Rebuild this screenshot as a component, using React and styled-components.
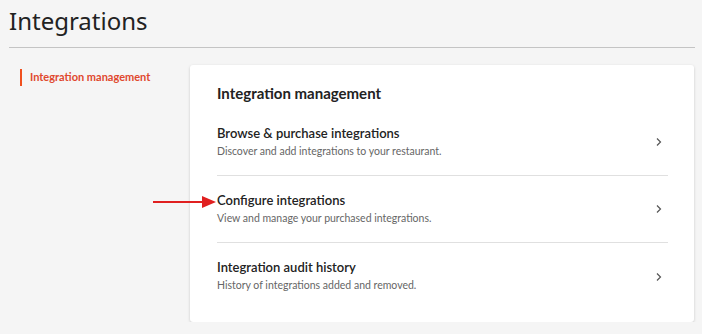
import React from "react";
import styled, { createGlobalStyle } from "styled-components";

const Global = createGlobalStyle`
  html, body { margin: 0; padding: 0; background: #f5f5f5; }
  body { font-family: Lato, "Open Sans", sans-serif; color: #222; }
`;

const Page = styled.div`
  padding: 5px 7px 0 9px;
  position: relative;
`;

const Title = styled.h1`
  margin: 0;
  font-family: "Noto Sans", sans-serif;
  font-weight: 400;
  font-size: 24px;
  line-height: 32px;
  color: #222;
  padding-bottom: 10px;
  border-bottom: 1px solid #c4c4c4;
`;

const Body = styled.div`
  display: grid;
  grid-template-columns: 181px 504px;
  margin-top: 17px;
`;

const Nav = styled.nav`
  padding-top: 4px;
  padding-left: 11px;
`;

const NavItem = styled.div`
  border-left: 2px solid ${(p) => (p.$active ? "#f0501e" : "transparent")};
  padding-left: 8px;
  height: 17px;
  line-height: 15px;
  font-size: 11px;
  font-weight: 700;
  color: #e0482e;
`;

const Card = styled.section`
  background: #fff;
  border-radius: 3px;
  box-shadow: 0 1px 3px rgba(0, 0, 0, 0.18);
  padding: 18px 26px 12px 27px;
`;

const CardTitle = styled.h2`
  margin: 0 0 6px;
  font-size: 15px;
  font-weight: 700;
  line-height: 20px;
  color: #222;
`;

const Row = styled.div`
  display: flex;
  align-items: center;
  justify-content: space-between;
  height: 67px;
  box-sizing: border-box;
  border-bottom: ${(p) => (p.$last ? "none" : "1px solid #e0e0e0")};
`;

const RowText = styled.div`
  display: flex;
  flex-direction: column;
  gap: 3px;
  margin-top: -2px;
`;

const RowTitle = styled.div`
  font-size: 13px;
  font-weight: 600;
  line-height: 16px;
  color: #222;
`;

const RowSub = styled.div`
  font-size: 10.5px;
  line-height: 14px;
  color: #666;
`;

const Chevron = styled.svg`
  width: 10px;
  height: 10px;
  margin-right: 4px;
  flex: none;
`;

const Arrow = styled.svg`
  position: absolute;
  left: 153px;
  top: 195px;
`;

const rows = [
  ["Browse & purchase integrations", "Discover and add integrations to your restaurant."],
  ["Configure integrations", "View and manage your purchased integrations."],
  ["Integration audit history", "History of integrations added and removed."],
];

export default function App() {
  return (
    <>
      <Global />
      <Page>
        <Title>Integrations</Title>
        <Body>
          <Nav>
            <NavItem $active>Integration management</NavItem>
          </Nav>
          <Card>
            <CardTitle>Integration management</CardTitle>
            {rows.map(([t, s], i) => (
              <Row key={t} $last={i === rows.length - 1}>
                <RowText>
                  <RowTitle>{t}</RowTitle>
                  <RowSub>{s}</RowSub>
                </RowText>
                <Chevron viewBox="0 0 10 10">
                  <path d="M3 1.5 L6.5 5 L3 8.5" fill="none" stroke="#555" strokeWidth="1.2" />
                </Chevron>
              </Row>
            ))}
          </Card>
        </Body>
        <Arrow width="64" height="14" viewBox="0 0 64 14">
          <line x1="0" y1="7" x2="52" y2="7" stroke="#e02020" strokeWidth="2" />
          <polygon points="49,1 63,7 49,13" fill="#e02020" />
        </Arrow>
      </Page>
    </>
  );
}
